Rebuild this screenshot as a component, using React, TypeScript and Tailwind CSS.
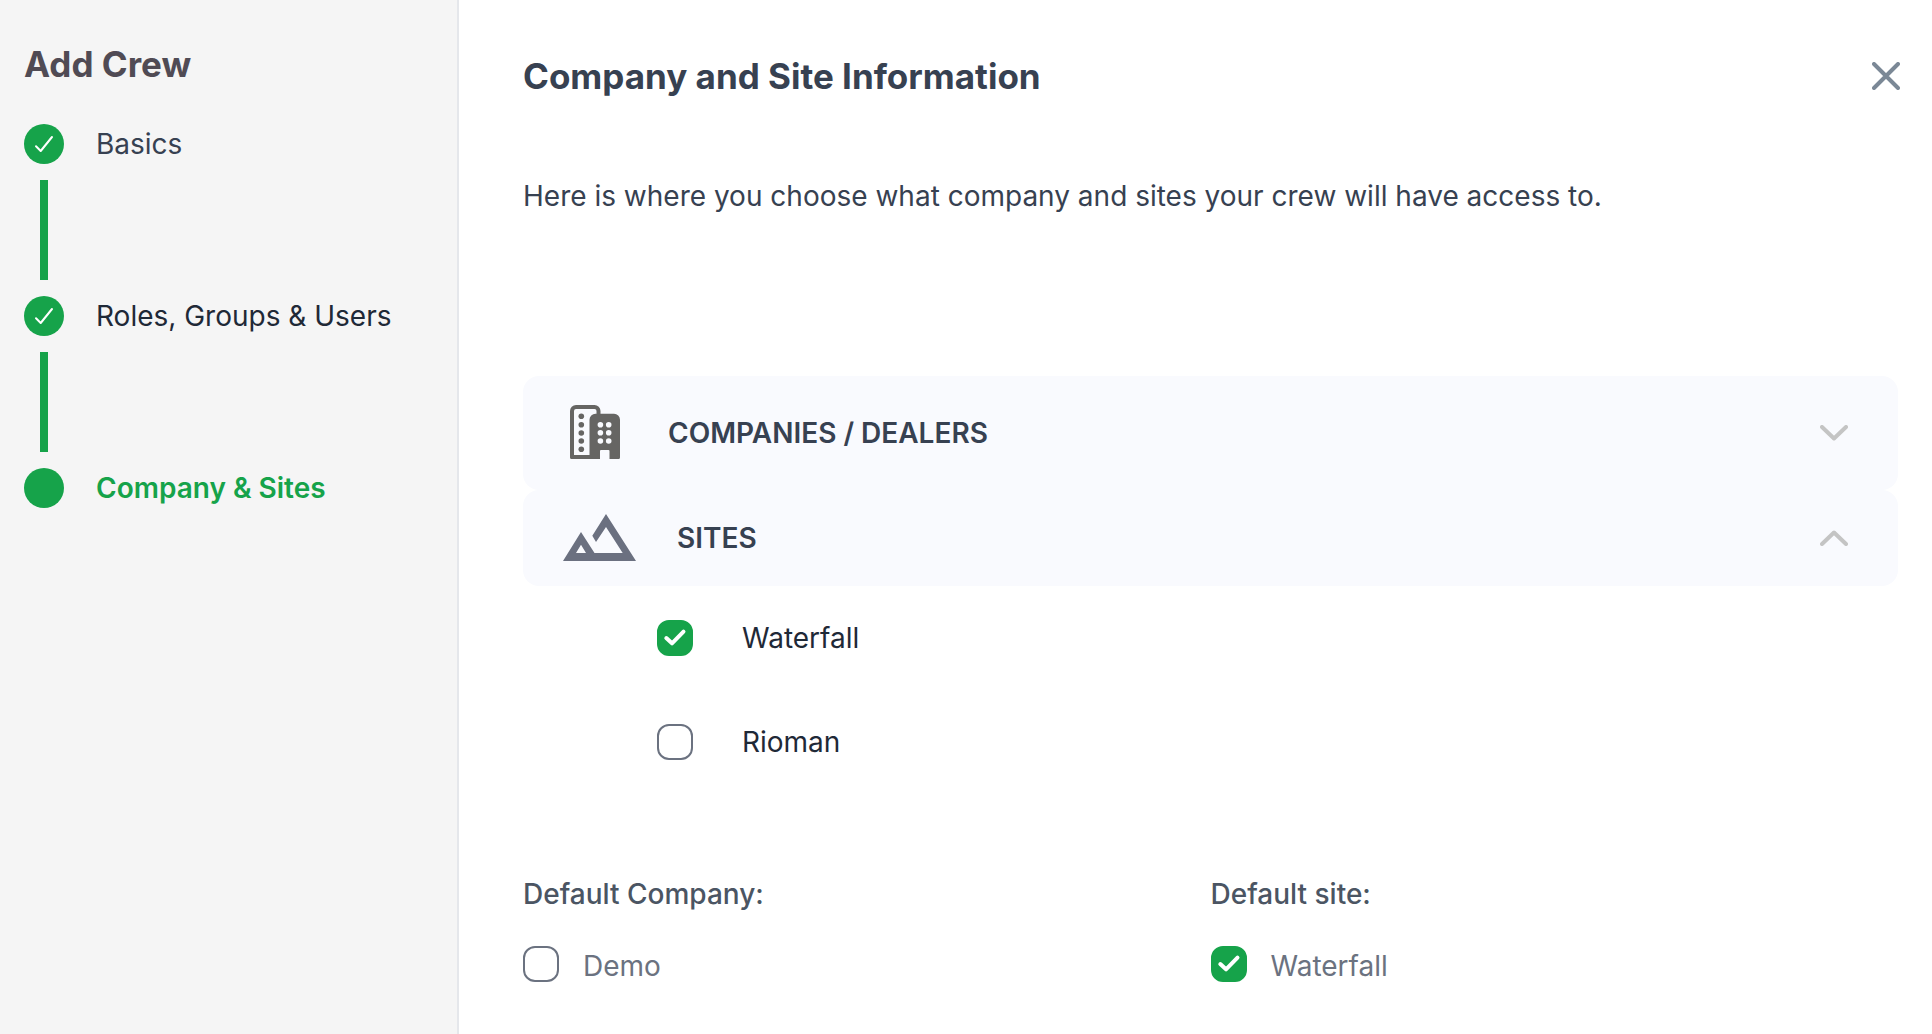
import React, { useState } from 'react';

const steps = [
  { label: 'Basics', done: true, className: 'text-[#374151]' },
  { label: 'Roles, Groups & Users', done: true, className: 'text-[#1f2937]' },
  { label: 'Company & Sites', done: false, className: 'font-semibold text-[#16a34a]' },
];

const BuildingsIcon = () => (
  <svg width="50" height="54" viewBox="0 0 50 54" fill="#666563" aria-hidden="true">
    <path
      fillRule="evenodd"
      d="M6 0H24.500a6 6 0 0 1 6 6V8.700H44a6 6 0 0 1 6 6V52.500a1.500 1.500 0 0 1-1.500 1.500H39.500V46a1 1 0 0 0-1-1H31a1 1 0 0 0-1 1V54H1.500A1.500 1.500 0 0 1 0 52.500V6a6 6 0 0 1 6-6ZM6 4a2 2 0 0 0-2 2V50H19.500V14.700a6 6 0 0 1 6-6h1V6a2 2 0 0 0-2-2Z"
    />
    {[11.3, 19.7, 28, 36, 44.3].map((y) => (
      <circle key={y} cx="11.3" cy={y} r="2.8" />
    ))}
    {[19.7, 27.8, 36].map((y) => (
      <g key={y} fill="#f9fafe">
        <circle cx="30.4" cy={y} r="2.8" />
        <circle cx="38.7" cy={y} r="2.8" />
      </g>
    ))}
  </svg>
);

const MountainsIcon = () => (
  <svg width="73" height="47" viewBox="0 0 73 47" fill="#6b7080" aria-hidden="true">
    <path
      fillRule="evenodd"
      d="M0 47L18 18L31.500 39H59.700L43 13L33 28L29.300 21.700L43 0L73 47ZM18 30.700L13 39H23Z"
    />
  </svg>
);

const Chevron = ({ open }: { open: boolean }) => (
  <svg
    width="28"
    height="16"
    viewBox="0 0 28 16"
    fill="none"
    stroke="#c4c4c4"
    strokeWidth="4"
    strokeLinecap="round"
    strokeLinejoin="round"
    className={open ? 'ml-auto rotate-180' : 'ml-auto'}
    aria-hidden="true"
  >
    <path d="M2 2L14 13.500L26 2" />
  </svg>
);

type CheckboxProps = {
  label: string;
  defaultChecked?: boolean;
  className?: string;
};

const Checkbox = ({ label, defaultChecked = false, className = '' }: CheckboxProps) => {
  const [checked, setChecked] = useState(defaultChecked);

  return (
    <label className={`flex w-fit cursor-pointer ${className}`}>
      <span className="grid size-9 shrink-0">
        <input
          type="checkbox"
          checked={checked}
          onChange={(e) => setChecked(e.target.checked)}
          className="col-start-1 row-start-1 size-9 appearance-none rounded-xl border-2 border-[#6b7280] bg-white checked:border-[#16a34a] checked:bg-[#16a34a]"
        />
        {checked && (
          <svg
            viewBox="0 0 36 36"
            fill="none"
            stroke="white"
            strokeWidth="4"
            strokeLinecap="round"
            strokeLinejoin="round"
            className="pointer-events-none col-start-1 row-start-1 size-9"
            aria-hidden="true"
          >
            <path d="M9.300 18L15 23.300L26.500 11.700" />
          </svg>
        )}
      </span>
      <span>{label}</span>
    </label>
  );
};

const App = () => {
  const [companiesOpen, setCompaniesOpen] = useState(false);
  const [sitesOpen, setSitesOpen] = useState(true);

  return (
    <div className="flex min-h-screen bg-white font-['Inter',sans-serif] text-[28px] leading-10 text-[#374151]">
      {/* Steps */}
      <aside className="w-[459px] shrink-0 border-r-2 border-[#e5e7eb] bg-[#f5f5f5] px-6 pt-11">
        <h1 className="text-[35px] leading-10 font-bold text-[#504b54]">Add Crew</h1>
        <ol className="mt-10">
          {steps.map((step, i) => (
            <li key={step.label}>
              <div className="flex items-center gap-8">
                <span className="flex size-10 items-center justify-center rounded-full bg-[#16a34a]">
                  {step.done && (
                    <svg
                      viewBox="0 0 40 40"
                      fill="none"
                      stroke="white"
                      strokeWidth="2"
                      strokeLinecap="round"
                      strokeLinejoin="round"
                      aria-hidden="true"
                    >
                      <path d="M12 22.300L16.700 27L28 13" />
                    </svg>
                  )}
                </span>
                <span className={step.className}>{step.label}</span>
              </div>
              {i < steps.length - 1 && <div className="my-4 ml-4 h-[100px] w-2 bg-[#16a34a]" />}
            </li>
          ))}
        </ol>
      </aside>

      <main className="min-w-0 flex-1 pt-14 pr-[34px] pl-16">
        <header className="-mr-0.5 flex items-center justify-between">
          <h2 className="text-[35px] leading-10 font-bold">Company and Site Information</h2>
          <button type="button" aria-label="Close" className="cursor-pointer">
            <svg
              width="28"
              height="28"
              viewBox="0 0 28 28"
              stroke="#7b8896"
              strokeWidth="4"
              strokeLinecap="round"
              aria-hidden="true"
            >
              <path d="M2 2L26 26M26 2L2 26" />
            </svg>
          </button>
        </header>

        <p className="mt-20">Here is where you choose what company and sites your crew will have access to.</p>

        {/* Accordion */}
        <section className="mt-40">
          <button
            type="button"
            aria-expanded={companiesOpen}
            onClick={() => setCompaniesOpen(!companiesOpen)}
            className="flex h-[114px] w-full cursor-pointer items-center gap-[41px] rounded-2xl bg-[#f9fafe] pr-[50px] pl-10 font-semibold"
          >
            <span className="flex w-16 justify-center pb-0.5">
              <BuildingsIcon />
            </span>
            COMPANIES / DEALERS
            <Chevron open={companiesOpen} />
          </button>
          {companiesOpen && (
            <div className="py-8 pl-[134px]">
              <Checkbox label="Demo" className="items-center gap-[49px] text-[#1f2937]" />
            </div>
          )}
          <button
            type="button"
            aria-expanded={sitesOpen}
            onClick={() => setSitesOpen(!sitesOpen)}
            className="flex h-24 w-full cursor-pointer items-center gap-[41px] rounded-2xl bg-[#f9fafe] pr-[50px] pl-10 font-semibold"
          >
            <span className="pb-0.5">
              <MountainsIcon />
            </span>
            SITES
            <Chevron open={sitesOpen} />
          </button>
          {sitesOpen && (
            <div className="flex flex-col gap-16 pt-8 pl-[134px]">
              <Checkbox label="Waterfall" defaultChecked className="items-center gap-[49px] text-[#1f2937]" />
              <Checkbox label="Rioman" className="items-center gap-[49px] text-[#1f2937]" />
            </div>
          )}
        </section>

        {/* Defaults */}
        <section className="mt-28 grid grid-cols-2 pb-12">
          <div>
            <h3 className="font-medium text-[#4b5563]">Default Company:</h3>
            <Checkbox label="Demo" className="mt-8 gap-6 text-[#6b7280]" />
          </div>
          <div>
            <h3 className="font-medium text-[#4b5563]">Default site:</h3>
            <Checkbox label="Waterfall" defaultChecked className="mt-8 gap-6 text-[#6b7280]" />
          </div>
        </section>
      </main>
    </div>
  );
};

export default App;
